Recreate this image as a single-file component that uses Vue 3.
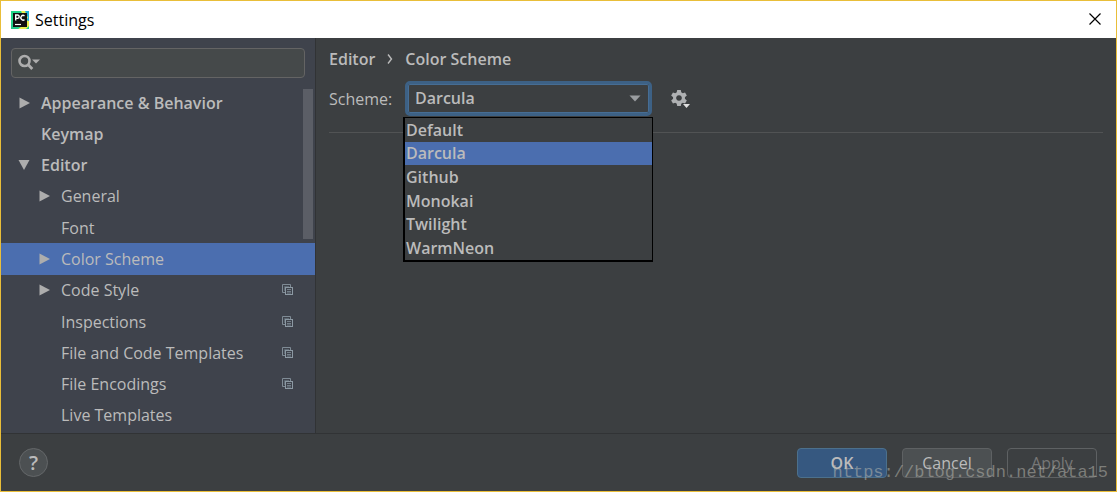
<script setup>
import { ref } from 'vue'

const filter = ref('')
const scheme = ref('Darcula')
const schemes = ['Default', 'Darcula', 'Github', 'Monokai', 'Twilight', 'WarmNeon']

const rows = [
  { label: 'Appearance & Behavior', top: true, arrow: 'closed' },
  { label: 'Keymap', top: true },
  { label: 'Editor', top: true, arrow: 'open' },
  { label: 'General', arrow: 'closed' },
  { label: 'Font' },
  { label: 'Color Scheme', arrow: 'closed', selected: true },
  { label: 'Code Style', arrow: 'closed', project: true },
  { label: 'Inspections', project: true },
  { label: 'File and Code Templates', project: true },
  { label: 'File Encodings', project: true },
  { label: 'Live Templates' },
]
</script>

<template>
  <div class="window">
    <header class="titlebar">
      <svg class="logo" width="18" height="18" viewBox="0 0 18 18" aria-hidden="true">
        <rect width="18" height="18" fill="#21d789" />
        <path d="M10 0h8v12l-5-4z" fill="#1fb0d8" />
        <path d="M10 0h4l3 7-3 2zM14 9l4 1v5l-3 3H7l6-4z" fill="#e9ee4c" />
        <path d="M0 11l4 4 4 3H0z" fill="#20c98a" />
        <rect x="2" y="2" width="14" height="14" fill="#101010" />
        <path d="M4.700 9.500V4h1.800a1.600 1.600 0 0 1 0 3.400H4.700M13.500 4.900a2.300 2.300 0 1 0 0 3.700" fill="none" stroke="#fff" stroke-width="1.400" />
        <path d="M4 13.500h6" stroke="#fff" stroke-width="1.200" />
      </svg>
      <h1>Settings</h1>
      <button class="close" type="button" aria-label="Close">
        <svg width="12" height="12" viewBox="0 0 12 12"><path d="M.5.5l11 11M11.500.5l-11 11" stroke="#000" stroke-width="1.200" /></svg>
      </button>
    </header>

    <div class="body">
      <aside class="sidebar">
        <label class="search">
          <svg width="24" height="18" viewBox="0 0 24 18" aria-hidden="true">
            <circle cx="7.500" cy="7" r="5" fill="none" stroke="#adadad" stroke-width="2.600" />
            <path d="M11 10.500l4.300 4.500" stroke="#adadad" stroke-width="2.800" />
            <path d="M15 5.500h8l-4 4z" fill="#adadad" />
          </svg>
          <input v-model="filter" type="text" aria-label="Search settings" />
        </label>
        <nav class="tree" aria-label="Settings">
          <a
            v-for="row in rows"
            :key="row.label"
            href="#"
            class="row"
            :class="{ top: row.top, selected: row.selected }"
          >
            <span class="twist">
              <svg v-if="row.arrow === 'closed'" width="12" height="12" viewBox="0 0 12 12"><path d="M1.500.5L12 6 1.500 11.500z" fill="#adadad" /></svg>
              <svg v-else-if="row.arrow === 'open'" width="12" height="12" viewBox="0 0 12 12"><path d="M.5 1h11L6 11z" fill="#adadad" /></svg>
            </span>
            <span class="name">{{ row.label }}</span>
            <svg v-if="row.project" width="12" height="12" viewBox="0 0 12 12">
              <path d="M3 8.500H.5v-8h8V3" fill="none" stroke="#7f8b95" />
              <path d="M2.500 7V2.500H7" fill="none" stroke="#5d6872" />
              <rect x="3.500" y="3.500" width="7" height="7" fill="none" stroke="#8c99a3" />
              <path d="M5 5.500h4M5 7.500h4M5 9h4" stroke="#74808a" />
            </svg>
          </a>
          <span class="thumb"></span>
        </nav>
      </aside>

      <main class="page">
        <div class="crumbs">
          <span>Editor</span>
          <svg width="6" height="10" viewBox="0 0 6 10" aria-hidden="true"><path d="M1 .5L4.500 5 1 9.500" fill="none" stroke="#bbb" stroke-width="1.400" /></svg>
          <span>Color Scheme</span>
        </div>
        <div class="line">
          <label for="scheme">Scheme:</label>
          <div class="combo">
            <select id="scheme" v-model="scheme">
              <option v-for="name in schemes" :key="name">{{ name }}</option>
            </select>
            <svg class="caret" width="12" height="7" viewBox="0 0 12 7" aria-hidden="true"><path d="M.5.500h11L6 6.500z" fill="#9a9da0" /></svg>
            <ul class="popup" role="listbox" aria-label="Scheme">
              <li
                v-for="name in schemes"
                :key="name"
                role="option"
                :aria-selected="name === scheme"
                @click="scheme = name"
              >{{ name }}</li>
            </ul>
          </div>
          <button class="gear" type="button" aria-label="Scheme actions">
            <svg width="20" height="20" viewBox="0 0 20 20">
              <g fill="#afb1b3">
                <path fill-rule="evenodd" d="M9 3a6 6 0 1 0 .01 0zM9 6.200a2.800 2.800 0 1 1-.01 0z" />
                <path d="M7.200 1h3.600l.6 3H6.600zM7.200 17h3.600l.6-3H6.600z" />
                <path d="M7.200 1h3.600l.6 3H6.600zM7.200 17h3.600l.6-3H6.600z" transform="rotate(60 9 9)" />
                <path d="M7.200 1h3.600l.6 3H6.600zM7.200 17h3.600l.6-3H6.600z" transform="rotate(120 9 9)" />
              </g>
              <path d="M13 15h7l-3.500 4z" fill="#e0e0e0" />
            </svg>
          </button>
        </div>
        <hr />
      </main>
    </div>

    <footer class="footer">
      <button class="help" type="button" aria-label="Help">?</button>
      <div class="actions">
        <button class="btn ok" type="button">OK</button>
        <button class="btn" type="button">Cancel</button>
        <button class="btn off" type="button" disabled>Apply</button>
      </div>
      <span class="mark">https://blog.csdn.net/ata15</span>
    </footer>
  </div>
</template>

<style>
body {
  margin: 0;
  background: #3c3f41;
}
</style>

<style scoped>
.window {
  box-sizing: border-box;
  min-height: 100vh;
  display: flex;
  flex-direction: column;
  border: 1px solid #e9be39;
  background: #3c3f41;
  color: #bbb;
  font: 16px/22px "Open Sans", "Noto Sans", sans-serif;
}
button,
input,
select {
  font: inherit;
  color: inherit;
}
.titlebar {
  display: flex;
  align-items: center;
  gap: 6px;
  height: 37px;
  padding: 0 15px 0 10px;
  background: #fff;
  color: #000;
}
.titlebar h1 {
  flex: 1;
  margin: 0;
  font-size: 16px;
  font-weight: 400;
}
.close {
  display: flex;
  padding: 0 0 2px;
  border: 0;
  background: none;
}
.body {
  flex: 1;
  display: flex;
}
.sidebar {
  width: 314px;
  flex: none;
  display: flex;
  flex-direction: column;
  background: #3f434c;
  border-right: 1px solid #313335;
}
.search {
  display: flex;
  align-items: center;
  height: 28px;
  margin: 10px 10px 9px;
  padding-left: 5px;
  border: 1px solid #646464;
  border-radius: 4px;
  background: #45494a;
}
.search input {
  flex: 1;
  min-width: 0;
  border: 0;
  outline: 0;
  background: none;
}
.tree {
  position: relative;
  flex: 1;
  display: grid;
  grid-auto-rows: 1fr;
  padding-bottom: 2px;
}
.row {
  display: flex;
  align-items: center;
  min-height: 31px;
  padding: 0 21px 0 37px;
  color: inherit;
  text-decoration: none;
}
.row.top {
  padding-left: 17px;
  font-weight: 600;
}
.row.selected {
  background: #4b6eaf;
}
.twist {
  display: flex;
  width: 23px;
}
.name {
  flex: 1;
}
.thumb {
  position: absolute;
  top: 2px;
  right: 2px;
  width: 10px;
  height: 150px;
  background: #5b5e66;
}
.page {
  flex: 1;
  min-width: 0;
  padding: 10px 13px 0;
}
.crumbs {
  display: flex;
  align-items: center;
  gap: 12px;
  font-weight: 600;
}
.line {
  display: flex;
  align-items: center;
  margin-top: 11px;
}
.line label {
  width: 76px;
}
.combo {
  position: relative;
  width: 247px;
}
.combo select {
  display: block;
  box-sizing: border-box;
  width: 100%;
  height: 35px;
  padding: 0 28px 2px 7px;
  appearance: none;
  border: 3px solid #3d6185;
  border-radius: 5px;
  outline: 0;
  background: #3c3f41;
  box-shadow: inset 0 0 0 1px #466d94;
  font-weight: 600;
}
.caret {
  position: absolute;
  top: 14px;
  right: 11px;
  pointer-events: none;
}
.popup {
  position: absolute;
  z-index: 1;
  top: 36px;
  left: -2px;
  right: -1px;
  display: grid;
  grid-auto-rows: 1fr;
  height: 142px;
  margin: 0;
  padding: 0;
  list-style: none;
  border: solid #000;
  border-width: 1px 1px 2px 2px;
  background: #3c3f41;
  font-weight: 600;
}
.popup li {
  display: flex;
  align-items: center;
  padding-left: 1px;
}
.popup li[aria-selected="true"] {
  background: #4b6eaf;
}
.gear {
  display: flex;
  margin-left: 18px;
  padding: 0;
  border: 0;
  background: none;
}
hr {
  height: 1px;
  margin: 16px 0 0;
  border: 0;
  background: #515354;
}
.footer {
  position: relative;
  display: flex;
  align-items: center;
  justify-content: space-between;
  height: 57px;
  padding: 0 19px 0 18px;
  border-top: 1px solid #313335;
}
.help {
  width: 29px;
  height: 29px;
  padding: 0;
  border: 1px solid #646769;
  border-radius: 50%;
  background: #4c5052;
  font-size: 20px;
  font-weight: 600;
  line-height: 26px;
}
.actions {
  display: flex;
  gap: 15px;
}
.btn {
  width: 90px;
  height: 30px;
  padding: 0;
  border: 1px solid #5e6163;
  border-radius: 4px;
  background: #4c5052;
}
.btn.ok {
  border-color: #4c708c;
  background: #365880;
  font-weight: 600;
}
.btn.off {
  background: none;
  color: #777;
}
.mark {
  position: absolute;
  right: 8px;
  bottom: 6px;
  color: rgba(190, 190, 180, 0.5);
  font: 17px/24px "Liberation Mono", monospace;
  pointer-events: none;
}
</style>
